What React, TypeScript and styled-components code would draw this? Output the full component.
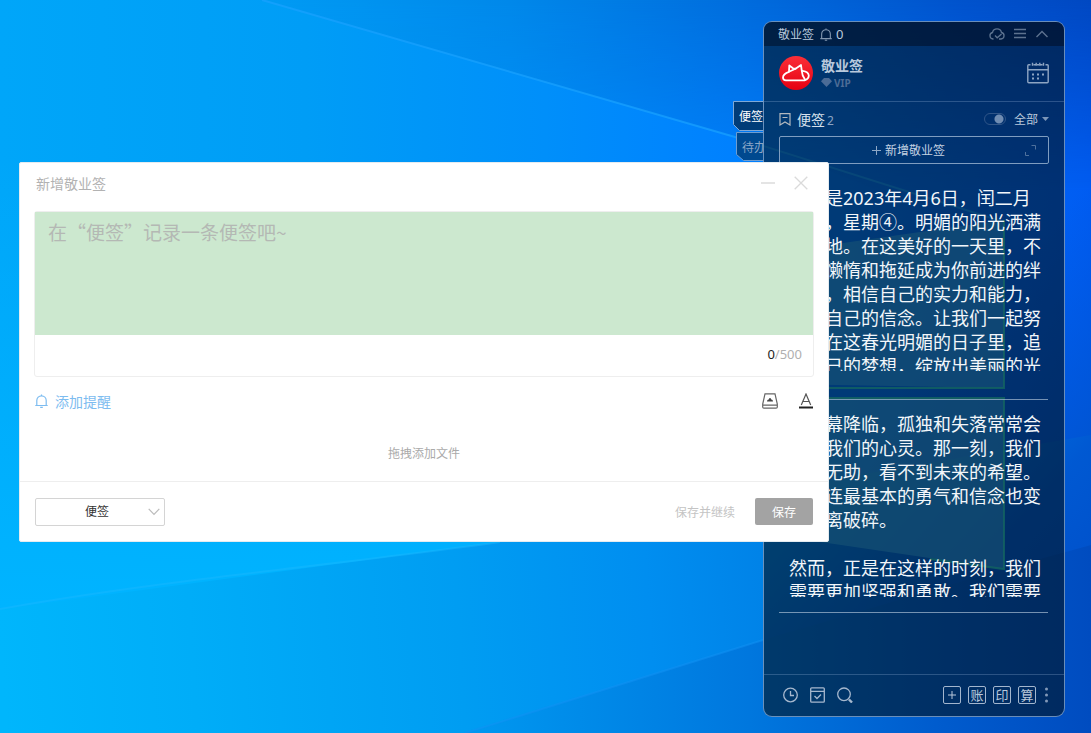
import React from "react";
import styled, { createGlobalStyle, css } from "styled-components";

const Global = createGlobalStyle`
  *, *::before, *::after { box-sizing: border-box; }
  body { margin: 0; overflow: hidden; background: #0078e0; }
  body, button, select, textarea, input {
    font-family: "Noto Sans", "Noto Sans CJK SC", sans-serif;
  }
  button { border: 0; padding: 0; background: none; color: inherit; cursor: pointer; }
  svg { display: block; }
`;

const Desktop = styled.main`
  position: relative;
  min-height: 100vh;
`;

const WallpaperSvg = styled.svg`
  position: absolute;
  inset: 0;
  width: 100%;
  height: 100%;
`;

const line = "rgba(170, 200, 235, 0.25)";

/* ---------- sticky-note panel ---------- */

const Panel = styled.aside`
  position: absolute;
  top: 21px;
  right: 26px;
  width: 302px;
  display: flex;
  flex-direction: column;
  min-height: calc(100vh - 37px);
  border: 1px solid rgba(140, 175, 215, 0.75);
  border-radius: 9px;
  background: rgba(0, 18, 32, 0.6);
  color: #b9c9dc;
`;

const TitleBar = styled.header`
  display: flex;
  align-items: center;
  height: 24px;
  padding: 0 15px 0 14px;
  border-radius: 8px 8px 0 0;
  background: rgba(0, 10, 30, 0.5);
  font-size: 12px;
  gap: 6px;
`;

const Group = styled.div<{ $gap: number; $end?: boolean }>`
  display: flex;
  align-items: center;
  gap: ${(p) => p.$gap}px;
  ${(p) => p.$end && css`margin-left: auto;`}
`;

const AlarmCount = styled.span`
  display: flex;
  align-items: center;
  gap: 4px;
  font-size: 13px;

  svg { opacity: 0.7; }
`;

const IconButton = styled.button<{ $dim?: boolean }>`
  display: flex;
  align-items: center;
  justify-content: center;
  opacity: ${(p) => (p.$dim ? 0.5 : 1)};
`;

const Profile = styled.section`
  display: flex;
  align-items: center;
  height: 56px;
  padding: 0 15px 2px;
  gap: 8px;
  border-bottom: 1px solid ${line};
`;

const UserName = styled.div`
  font-size: 14px;
  line-height: 20px;
  font-weight: 700;
`;

const Vip = styled.div`
  display: flex;
  align-items: center;
  gap: 2px;
  font-size: 10px;
  line-height: 14px;
  font-weight: 700;
  color: #4c6c96;
`;

const ListHead = styled.div`
  display: flex;
  align-items: center;
  height: 34px;
  padding: 0 15px;
  gap: 6px;
`;

const ListTitle = styled.h2`
  margin: 0;
  font-size: 14px;
  font-weight: 400;
  color: #d5e0ec;
`;

const Count = styled.span`
  font-size: 12px;
  color: #8ba4c4;
  margin-left: 2px;
`;

const Toggle = styled.input`
  appearance: none;
  width: 22px;
  height: 12px;
  margin: 0;
  border: 1px solid #2f5588;
  border-radius: 6px;
  background: radial-gradient(circle at 14px 5px, #6f8cb2 4px, transparent 5px);
`;

const FilterButton = styled.button`
  display: flex;
  align-items: center;
  gap: 4px;
  font-size: 12px;
`;

const AddButton = styled.button`
  display: flex;
  align-items: center;
  justify-content: center;
  height: 28px;
  margin: 0 15px;
  border: 1px solid #7f9dc0;
  border-radius: 2px;
  font-size: 12px;
  padding: 0 12px;
`;

const AddLabel = styled.span`
  display: flex;
  flex: 1;
  align-items: center;
  justify-content: center;
  gap: 4px;
  color: #c4d2e2;
`;

const NoteList = styled.ul`
  list-style: none;
  margin: 0;
  padding: 10px 16px 0 15px;
  flex: 1;
`;

const Note = styled.li`
  padding: 12px 0 28px 10px;
  border-bottom: 1px solid rgba(180, 200, 220, 0.65);

  &:last-child { padding-bottom: 15px; }
`;

const NoteText = styled.p`
  margin: 0;
  height: 185px;
  overflow: hidden;
  font-size: 18px;
  line-height: 24px;
  white-space: pre;
  color: #f2f6fa;
`;

const PanelFoot = styled.footer`
  display: flex;
  align-items: center;
  height: 42px;
  padding: 0 14px 2px 19px;
  border-top: 1px solid ${line};
`;

const SquareButton = styled.button`
  width: 18px;
  height: 18px;
  border: 1px solid #a3b6ce;
  border-radius: 2px;
  display: flex;
  align-items: center;
  justify-content: center;
  font-size: 13px;
  line-height: 16px;
`;

const SideTabs = styled.nav`
  position: absolute;
  top: 101px;
  right: 328px;
  display: flex;
  flex-direction: column;
  align-items: flex-end;
  gap: 1px;
`;

const TabShape = styled.svg`
  position: absolute;
  inset: 0;
`;

const SideTab = styled.button<{ $active?: boolean }>`
  position: relative;
  width: ${(p) => (p.$active ? 30 : 27)}px;
  height: 30px;
  padding-left: 6px;
  overflow: hidden;
  white-space: nowrap;
  text-align: left;
  font-size: 12px;
  color: ${(p) => (p.$active ? "#fff" : "#8ba6c6")};

  span { position: relative; }
`;

/* ---------- new-note dialog ---------- */

const Dialog = styled.form`
  position: absolute;
  top: 162px;
  left: 19px;
  right: 262px;
  border: 1px solid #e4ebf0;
  border-radius: 2px;
  background: #fff;
`;

const DialogHead = styled.header`
  display: flex;
  align-items: center;
  justify-content: space-between;
  height: 40px;
  padding: 0 20px 0 16px;
`;

const DialogTitle = styled.h1`
  margin: 0;
  font-size: 14px;
  font-weight: 400;
  color: #b2b2b2;
`;

const Editor = styled.div`
  margin: 8px 14px 0;
  border: 1px solid #eee;
  border-radius: 3px;
`;

const NoteInput = styled.textarea`
  display: block;
  width: 100%;
  height: 123px;
  padding: 6px 13px;
  border: 0;
  outline: 0;
  resize: none;
  background: #cce8cf;
  font-family: "Noto Sans CJK SC", sans-serif;
  font-size: 19px;
  line-height: 28px;
  color: #333;

  &::placeholder { color: #b4b8b4; opacity: 1; }
`;

const Counter = styled.div`
  height: 41px;
  padding-right: 11px;
  text-align: right;
  font-size: 13px;
  line-height: 39px;
  color: #b0b0b0;

  b { font-weight: 400; color: #222; }
`;

const Tools = styled.div`
  display: flex;
  align-items: center;
  justify-content: space-between;
  height: 47px;
  padding: 0 15px;
`;

const ReminderButton = styled.button`
  display: flex;
  align-items: center;
  gap: 7px;
  font-size: 14px;
  color: #7dbcf0;
`;

const DropZone = styled.div`
  height: 57px;
  text-align: center;
  font-size: 12px;
  line-height: 60px;
  color: #aaa;
`;

const DialogFoot = styled.footer`
  display: flex;
  align-items: center;
  height: 60px;
  padding: 0 15px;
  border-top: 1px solid #eee;
`;

const SelectBox = styled.div`
  position: relative;
  width: 130px;

  svg { position: absolute; right: 5px; top: 9px; pointer-events: none; }
`;

const Category = styled.select`
  appearance: none;
  display: block;
  width: 100%;
  height: 28px;
  padding: 0 6px 0 0;
  border: 1px solid #d4d4d4;
  border-radius: 2px;
  background: #fff;
  color: #333;
  font-size: 12px;
  text-align: center;
  text-align-last: center;
`;

const PlainButton = styled.button`
  font-size: 12px;
  color: #c4c4c4;
`;

const SaveButton = styled.button`
  width: 58px;
  height: 27px;
  border-radius: 2px;
  background: #a3a3a3;
  color: #fff;
  font-size: 12px;
`;

/* ---------- drawings ---------- */

const Wallpaper = () => (
  <WallpaperSvg viewBox="0 0 1091 733" preserveAspectRatio="none" aria-hidden="true">
    <defs>
      <linearGradient id="base" gradientUnits="userSpaceOnUse" x1="0" y1="160" x2="1091" y2="160">
        <stop offset="0" stopColor="#00a6f9" />
        <stop offset="0.28" stopColor="#009df6" />
        <stop offset="0.5" stopColor="#008ffa" />
        <stop offset="0.68" stopColor="#0080ff" />
        <stop offset="0.86" stopColor="#006cf6" />
        <stop offset="1" stopColor="#005cf2" />
      </linearGradient>
      <linearGradient id="top" gradientUnits="userSpaceOnUse" x1="260" y1="0" x2="1091" y2="0">
        <stop offset="0" stopColor="#009bf4" />
        <stop offset="0.3" stopColor="#0088ea" />
        <stop offset="0.6" stopColor="#006adc" />
        <stop offset="0.85" stopColor="#0052cc" />
        <stop offset="1" stopColor="#0048c2" />
      </linearGradient>
      <linearGradient id="topFade" x1="0" y1="0" x2="0" y2="1">
        <stop offset="0" stopColor="#fff" />
        <stop offset="0.4" stopColor="#fff" stopOpacity="0.65" />
        <stop offset="1" stopColor="#fff" stopOpacity="0" />
      </linearGradient>
      <mask id="topMask">
        <rect width="1091" height="190" fill="url(#topFade)" />
      </mask>
      <linearGradient id="warm" x1="0" y1="0" x2="0" y2="1">
        <stop offset="0" stopColor="#00b4ff" stopOpacity="0" />
        <stop offset="1" stopColor="#00b4ff" />
      </linearGradient>
      <linearGradient id="low" gradientUnits="userSpaceOnUse" x1="0" y1="650" x2="763" y2="600">
        <stop offset="0" stopColor="#00b6fc" />
        <stop offset="0.25" stopColor="#00adf8" />
        <stop offset="0.6" stopColor="#009df2" />
        <stop offset="0.85" stopColor="#008ef0" />
        <stop offset="1" stopColor="#0083e8" />
      </linearGradient>
      <linearGradient id="right" gradientUnits="userSpaceOnUse" x1="800" y1="300" x2="1091" y2="560">
        <stop offset="0.35" stopColor="#0054d4" stopOpacity="0" />
        <stop offset="0.8" stopColor="#0054d0" stopOpacity="0.9" />
        <stop offset="1" stopColor="#0052cc" />
      </linearGradient>
      <linearGradient id="corner" gradientUnits="userSpaceOnUse" x1="470" y1="700" x2="1091" y2="700">
        <stop offset="0" stopColor="#0098f0" />
        <stop offset="0.45" stopColor="#0077de" />
        <stop offset="0.75" stopColor="#005cce" />
        <stop offset="1" stopColor="#004cc0" />
      </linearGradient>
    </defs>
    <rect width="1091" height="733" fill="url(#base)" />
    <path d="M260 0H1091V240H1004L763 145Z" fill="url(#top)" mask="url(#topMask)" />
    <rect y="160" width="500" height="450" fill="url(#warm)" />
    <path d="M0 609 500 542 829 480 1004 450V733H0Z" fill="url(#low)" />
    <path d="M1004 450 1091 435V733H1004Z" fill="#0083e8" />
    <path d="M763 190H1091V733H763Z" fill="url(#right)" />
    <path d="M465 733 763 640 1004 569 1091 545V733Z" fill="url(#corner)" />
    <path d="M0 609C160 580 330 566 500 542" stroke="#1ab8ff" strokeWidth="2" opacity="0.45" fill="none" />
    <path d="M262 0 735 137 1004 222" stroke="#1aa2ff" strokeWidth="2" opacity="0.7" fill="none" />
    <path d="M465 733 763 640" stroke="#1292f4" strokeWidth="2" opacity="0.5" fill="none" />
    <path d="M780 252 1004 220V388L780 384Z" fill="#3cb4f4" opacity="0.6" />
    <path d="M780 398H1004V569L780 536Z" fill="#3cb4f4" opacity="0.6" />
    <path d="M1004 220V388H800M800 398H1004V569L930 559" fill="none" stroke="#30e0c0" strokeWidth="2" opacity="0.8" />
  </WallpaperSvg>
);

const Bell = ({ size }: { size: number }) => (
  <svg width={size} height={size + 1} viewBox="0 0 13 14" fill="none" stroke="currentColor" strokeWidth="1.2">
    <path d="M.3 11.500h12.400M1.800 11.500V6.500a4.700 4.700 0 0 1 9.400 0v5M6.500 1.800V.4M5.200 13.300h2.600" />
  </svg>
);

const Avatar = () => (
  <svg width="34" height="34" viewBox="0 0 34 34" aria-label="头像">
    <defs>
      <linearGradient id="red" x1="0" y1="0" x2="0" y2="1">
        <stop offset="0" stopColor="#fa2f38" />
        <stop offset="1" stopColor="#e60012" />
      </linearGradient>
    </defs>
    <circle cx="17" cy="17" r="17" fill="url(#red)" />
    <g fill="none" stroke="#fff" strokeWidth="1.8" strokeLinejoin="round" strokeLinecap="round">
      <path d="M10 15.500 10.300 9.500 14 12.300 16.500 12.800 22 9 22.800 15Q23 19.500 26 23.500" />
      <path d="M16.500 12.800 10 15.800Q4 18 4 21.500 4 24.300 7 24.300H25.500Q29.800 23 29.800 19.500 29.500 15.500 23.500 14.800" />
    </g>
  </svg>
);

const Calendar = () => (
  <svg width="22" height="22" viewBox="0 0 22 22" fill="none" stroke="#8ea5c3" strokeWidth="1.4">
    <path d="M3.500 2.800H1.700Q.8 2.800.8 3.800v16q0 1 1 1h18.400q1 0 1-1v-16q0-1-.9-1h-1.800M.8 7.800h20.400" />
    <path d="M5.500.8v3M9.200.8v3M12.800.8v3M16.500.8v3M6.500 2.800h2M10 2.800h2M13.500 2.800h2" />
    <path d="M5 12.500h2m3 0h2m3 0h2M5 16.500h2m3 0h2" strokeWidth="1.8" />
  </svg>
);

/* ---------- content ---------- */

const notes = [
  `今天是2023年4月6日，闰二月
十六，星期④。明媚的阳光洒满
了大地。在这美好的一天里，不
要让懒惰和拖延成为你前进的绊
脚石，相信自己的实力和能力，
坚定自己的信念。让我们一起努
力，在这春光明媚的日子里，追
逐自己的梦想，绽放出美丽的光`,
  `当夜幕降临，孤独和失落常常会
侵袭我们的心灵。那一刻，我们
感到无助，看不到未来的希望。
甚至连最基本的勇气和信念也变
得支离破碎。

然而，正是在这样的时刻，我们
需要更加坚强和勇敢。我们需要`,
];

export default function App() {
  return (
    <>
      <Global />
      <Desktop lang="zh-CN">
        <Wallpaper />

        <SideTabs aria-label="分类">
          <SideTab $active>
            <TabShape width="30" height="30" viewBox="0 0 30 30">
              <path d="M30 .5H.5v23l6 6H30" fill="#003c78" stroke="#7fa9d6" />
            </TabShape>
            <span>便签</span>
          </SideTab>
          <SideTab>
            <TabShape width="27" height="30" viewBox="0 0 27 30">
              <path d="M27 .5H.5v22l7 6H27" fill="#00498f" stroke="#6f9dcf" />
            </TabShape>
            <span>待办</span>
          </SideTab>
        </SideTabs>

        <Panel>
          <TitleBar>
            <span>敬业签</span>
            <AlarmCount>
              <Bell size={12} />
              <span>0</span>
            </AlarmCount>
            <Group $gap={9} $end>
              <IconButton $dim aria-label="同步">
                <svg width="16" height="14" viewBox="0 0 16 14" fill="none" stroke="currentColor" strokeWidth="1.3">
                  <path d="M4.500 12H4A3.300 3.300 0 0 1 3.500 5.500 4.600 4.600 0 0 1 12.500 5.500 3.300 3.300 0 0 1 12 12h-2M6 8.500l2.200 2.300L12.500 7" />
                </svg>
              </IconButton>
              <IconButton $dim aria-label="菜单">
                <svg width="12" height="12" viewBox="0 0 12 12" stroke="currentColor" strokeWidth="1.3">
                  <path d="M0 1.500h12M0 5.500h12M0 9.500h12" />
                </svg>
              </IconButton>
              <IconButton $dim aria-label="收起">
                <svg width="14" height="12" viewBox="0 0 14 12" fill="none" stroke="currentColor" strokeWidth="1.4">
                  <path d="M1.500 9 7 3.500 12.500 9" />
                </svg>
              </IconButton>
            </Group>
          </TitleBar>

          <Profile>
            <Avatar />
            <div>
              <UserName>敬业签</UserName>
              <Vip>
                <svg width="11" height="9" viewBox="0 0 11 9">
                  <path d="M3 0h5l3 3.200L5.500 9 0 3.200Z" fill="#4c6c96" />
                </svg>
                VIP
              </Vip>
            </div>
            <Group $gap={0} $end>
              <IconButton aria-label="日历">
                <Calendar />
              </IconButton>
            </Group>
          </Profile>

          <ListHead>
            <svg width="12" height="13" viewBox="0 0 12 13" fill="none" stroke="#b3b9bf" strokeWidth="1.2">
              <path d="M1 .6h10v11.400L6 9 1 12ZM3.500 4.500h5" />
            </svg>
            <ListTitle>
              便签
              <Count>2</Count>
            </ListTitle>
            <Group $gap={8} $end>
              <Toggle type="checkbox" defaultChecked aria-label="显示已完成" />
              <FilterButton>
                全部
                <svg width="7" height="4" viewBox="0 0 7 4">
                  <path d="M0 0h7L3.500 4Z" fill="#7c96b8" />
                </svg>
              </FilterButton>
            </Group>
          </ListHead>

          <AddButton>
            <AddLabel>
              <svg width="9" height="9" viewBox="0 0 9 9" stroke="#8fa8c6">
                <path d="M0 4.500h9M4.500 0v9" />
              </svg>
              新增敬业签
            </AddLabel>
            <svg width="11" height="11" viewBox="0 0 11 11" fill="none" stroke="#4f719d">
              <path d="M6.500.5h4v4M.5 7v3.500H4" />
            </svg>
          </AddButton>

          <NoteList>
            {notes.map((text) => (
              <Note key={text}>
                <NoteText>{text}</NoteText>
              </Note>
            ))}
          </NoteList>

          <PanelFoot>
            <Group $gap={12}>
              <IconButton aria-label="时间轴">
                <svg width="15" height="16" viewBox="0 0 15 16" fill="none" stroke="#a6b8ce" strokeWidth="1.3">
                  <circle cx="7.500" cy="8" r="6.800" />
                  <path d="M7.500 4v4.500H11" />
                </svg>
              </IconButton>
              <IconButton aria-label="已完成">
                <svg width="15" height="16" viewBox="0 0 15 16" fill="none" stroke="#a6b8ce" strokeWidth="1.3">
                  <rect x=".7" y=".8" width="13.600" height="14.400" rx="1" />
                  <path d="M1 4.300h13M4.500 9l2.500 2.500 4-4" />
                </svg>
              </IconButton>
              <IconButton aria-label="搜索">
                <svg width="16" height="16" viewBox="0 0 16 16" fill="none" stroke="#a6b8ce" strokeWidth="1.3">
                  <circle cx="7" cy="7.300" r="6.300" />
                  <path d="M12 12.500l3 3" strokeWidth="2.400" />
                </svg>
              </IconButton>
            </Group>
            <Group $gap={7} $end>
              <SquareButton aria-label="新增">
                <svg width="8" height="8" viewBox="0 0 8 8" stroke="#b9c9dc">
                  <path d="M0 4h8M4 0v8" />
                </svg>
              </SquareButton>
              <SquareButton>账</SquareButton>
              <SquareButton>印</SquareButton>
              <SquareButton>算</SquareButton>
              <IconButton aria-label="更多">
                <svg width="7" height="16" viewBox="0 0 7 16" fill="#8299b8">
                  <circle cx="3.500" cy="2" r="1.500" />
                  <circle cx="3.500" cy="8" r="1.500" />
                  <circle cx="3.500" cy="14" r="1.500" />
                </svg>
              </IconButton>
            </Group>
          </PanelFoot>
        </Panel>

        <Dialog onSubmit={(e) => e.preventDefault()}>
          <DialogHead>
            <DialogTitle>新增敬业签</DialogTitle>
            <Group $gap={19}>
              <IconButton type="button" aria-label="最小化">
                <svg width="14" height="14" viewBox="0 0 14 14" stroke="#e4e4e4" strokeWidth="2">
                  <path d="M0 7h14" />
                </svg>
              </IconButton>
              <IconButton type="button" aria-label="关闭">
                <svg width="14" height="14" viewBox="0 0 14 14" stroke="#dadada" strokeWidth="1.3">
                  <path d="M.7.7l12.600 12.600M13.300.7.7 13.300" />
                </svg>
              </IconButton>
            </Group>
          </DialogHead>

          <Editor>
            <NoteInput aria-label="内容" placeholder="在“便签”记录一条便签吧~" maxLength={500} />
            <Counter>
              <b>0</b>/500
            </Counter>
          </Editor>

          <Tools>
            <ReminderButton type="button">
              <Bell size={13} />
              添加提醒
            </ReminderButton>
            <Group $gap={21}>
              <IconButton type="button" aria-label="背景颜色">
                <svg width="16" height="16" viewBox="0 0 16 16" fill="none" stroke="#666" strokeWidth="1.2">
                  <path d="M3 .8h10L15.300 11v3q0 1.200-1.200 1.200H1.900Q.7 15.200.7 14v-3ZM.9 12.200h14.200" />
                  <path d="M5 8.500q0-2 1.700-2Q8 3.600 9.300 6.500 11 6.500 11 8.500Z" fill="#444" stroke="none" />
                </svg>
              </IconButton>
              <IconButton type="button" aria-label="文字颜色">
                <svg width="14" height="16" viewBox="0 0 14 16" fill="none" stroke="#555" strokeWidth="1.2">
                  <path d="M2.300 12 7 1l4.700 11M3.800 8.500h6.400" />
                  <path d="M0 14.500h14" stroke="#222" strokeWidth="2" />
                </svg>
              </IconButton>
            </Group>
          </Tools>

          <DropZone>拖拽添加文件</DropZone>

          <DialogFoot>
            <SelectBox>
              <Category aria-label="分类" defaultValue="note">
                <option value="note">便签</option>
                <option value="todo">待办</option>
              </Category>
              <svg width="12" height="10" viewBox="0 0 12 10" fill="none" stroke="#bbb" strokeWidth="1.2">
                <path d="M.7 1.800 6 7.300l5.300-5.500" />
              </svg>
            </SelectBox>
            <Group $gap={20} $end>
              <PlainButton type="button">保存并继续</PlainButton>
              <SaveButton type="submit">保存</SaveButton>
            </Group>
          </DialogFoot>
        </Dialog>
      </Desktop>
    </>
  );
}
